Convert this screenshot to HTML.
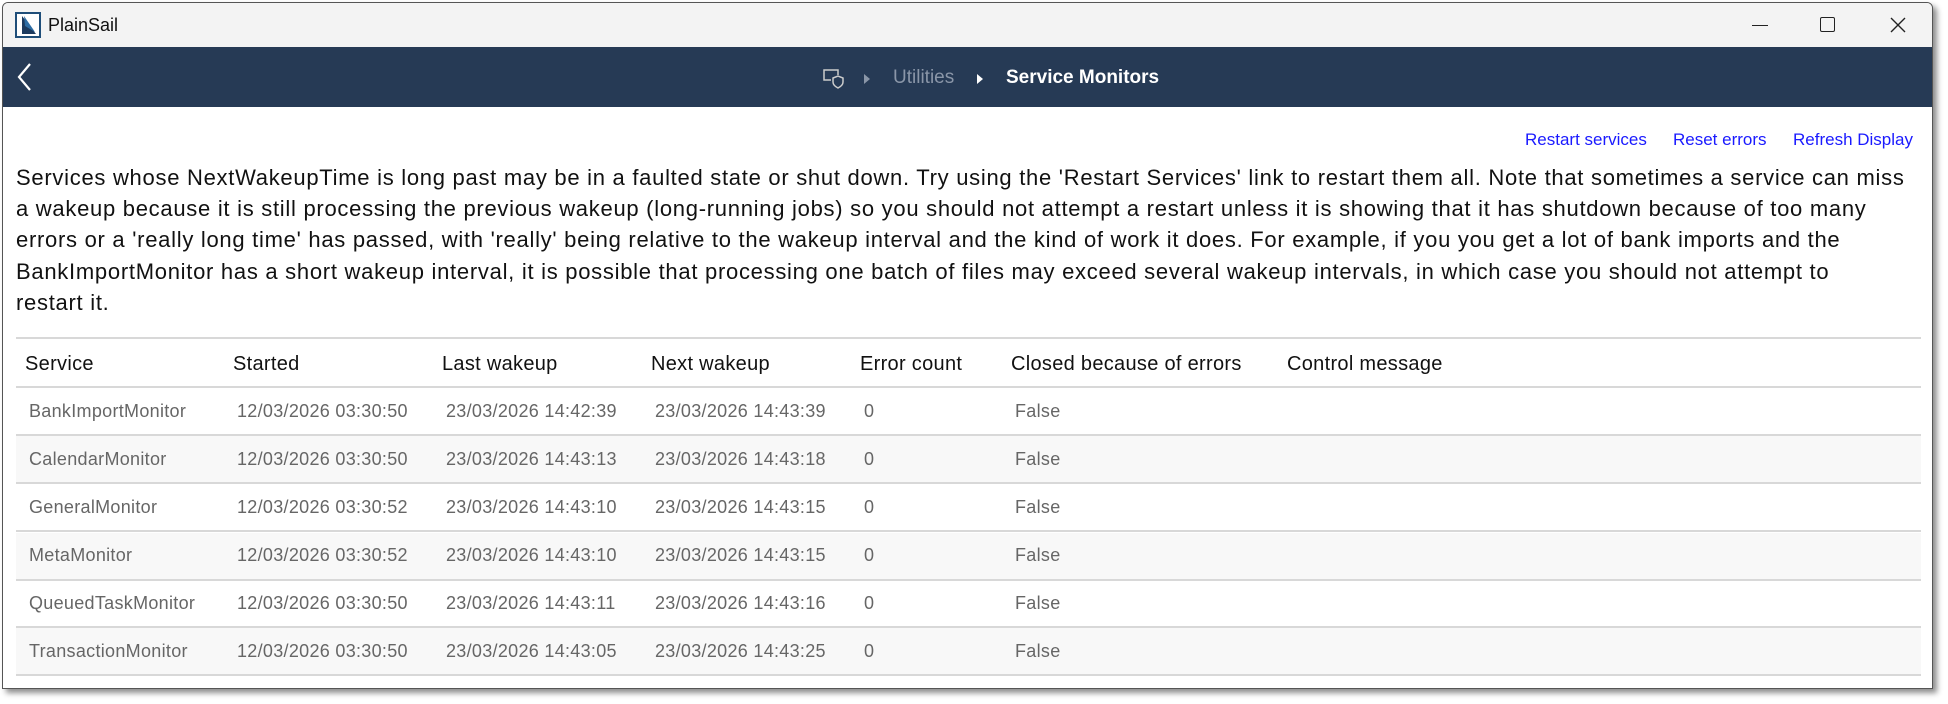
<!DOCTYPE html>
<html><head><meta charset="utf-8"><style>
*{margin:0;padding:0;box-sizing:border-box}
body{width:1948px;height:704px;background:#fff;font-family:"Liberation Sans",sans-serif;position:relative;overflow:hidden}
.win{position:absolute;left:2px;top:2px;width:1931px;height:687px;border:1px solid #555;background:#fff;box-shadow:4px 4px 6px rgba(0,0,0,.45);border-radius:6px 6px 0 0;overflow:hidden}
.title{position:absolute;left:0;top:0;width:100%;height:44px;background:#f3f3f3}
.nav{position:absolute;left:0;top:44px;width:100%;height:60px;background:#263a55}
.abs{position:absolute;white-space:nowrap}
.link{color:#1a1aff;font-size:17px}
.p{font-size:22px;color:#111;left:13px;letter-spacing:0.72px}
.th{font-size:20px;color:#111;letter-spacing:0.3px}
.td{font-size:18px;color:#666;letter-spacing:0.3px}
.line{position:absolute;left:13px;width:1905px;height:2px;background:#d8d8d8}
.alt{position:absolute;left:13px;width:1905px;height:47px;background:#f8f8f8}
</style></head><body>
<div class="win">
<div class="title">
<svg class="abs" style="left:12px;top:9px" width="26" height="26" viewBox="0 0 26 26"><rect x="1" y="1" width="24" height="24" fill="#fff" stroke="#1f4e79" stroke-width="2"/><path d="M7 4 L7 22 L21 22 Z" fill="#1c3a5e"/><path d="M9 4 L20 20 L10 14Z" fill="#2e6da4"/></svg>
<div class="abs" style="left:45px;top:12px;font-size:18px;color:#111">PlainSail</div>
<div class="abs" style="left:1749px;top:22px;width:16px;height:1px;background:#222"></div>
<div class="abs" style="left:1817px;top:14px;width:15px;height:15px;border:1.5px solid #222;border-radius:2px"></div>
<svg class="abs" style="left:1887px;top:14px" width="16" height="16"><path d="M1 1L15 15M15 1L1 15" stroke="#222" stroke-width="1.4"/></svg>
</div>
<div class="nav">
<svg class="abs" style="left:14px;top:16px" width="16" height="28"><path d="M13 1L2 14L13 27" stroke="#fff" stroke-width="2.2" fill="none"/></svg>
<svg class="abs" style="left:820px;top:22px" width="22" height="20" viewBox="0 0 22 20"><path d="M8 11H1V1H15V6" stroke="#ccc" stroke-width="1.5" fill="none"/><path d="M10 9L15 7L20 9V13C20 16 17 18 15 19C13 18 10 16 10 13Z" stroke="#ccc" stroke-width="1.5" fill="none"/></svg>
<svg class="abs" style="left:860px;top:26px" width="8" height="12"><path d="M1 1L7 6L1 11Z" fill="#8a96a8"/></svg>
<div class="abs" style="left:890px;top:20px;font-size:19px;color:#8a96a8">Utilities</div>
<svg class="abs" style="left:973px;top:26px" width="8" height="12"><path d="M1 1L7 6L1 11Z" fill="#fff"/></svg>
<div class="abs" style="left:1003px;top:20px;font-size:19px;color:#fff;font-weight:bold">Service Monitors</div>
</div>
<div class="abs link" style="left:1522px;top:127px">Restart services</div>
<div class="abs link" style="left:1670px;top:127px">Reset errors</div>
<div class="abs link" style="left:1790px;top:127px">Refresh Display</div>
<div class="abs p" style="top:162px">Services whose NextWakeupTime is long past may be in a faulted state or shut down. Try using the 'Restart Services' link to restart them all. Note that sometimes a service can miss</div>
<div class="abs p" style="top:193px">a wakeup because it is still processing the previous wakeup (long-running jobs) so you should not attempt a restart unless it is showing that it has shutdown because of too many</div>
<div class="abs p" style="top:224px">errors or a 'really long time' has passed, with 'really' being relative to the wakeup interval and the kind of work it does. For example, if you you get a lot of bank imports and the</div>
<div class="abs p" style="top:256px">BankImportMonitor has a short wakeup interval, it is possible that processing one batch of files may exceed several wakeup intervals, in which case you should not attempt to</div>
<div class="abs p" style="top:287px">restart it.</div>
<div class="line" style="top:334px"></div>
<div class="abs th" style="left:22px;top:350px">Service</div>
<div class="abs th" style="left:230px;top:350px">Started</div>
<div class="abs th" style="left:439px;top:350px">Last wakeup</div>
<div class="abs th" style="left:648px;top:350px">Next wakeup</div>
<div class="abs th" style="left:857px;top:350px">Error count</div>
<div class="abs th" style="left:1008px;top:350px">Closed because of errors</div>
<div class="abs th" style="left:1284px;top:350px">Control message</div>
<div class="line" style="top:383px"></div>
<div class="alt" style="top:433px"></div>
<div class="alt" style="top:530px"></div>
<div class="alt" style="top:625px"></div>
<div class="line" style="top:431px"></div>
<div class="line" style="top:479px"></div>
<div class="line" style="top:527px"></div>
<div class="line" style="top:576px"></div>
<div class="line" style="top:623px"></div>
<div class="line" style="top:671px"></div>
<div class="abs td" style="left:26px;top:398px">BankImportMonitor</div><div class="abs td" style="left:234px;top:398px">12/03/2026 03:30:50</div><div class="abs td" style="left:443px;top:398px">23/03/2026 14:42:39</div><div class="abs td" style="left:652px;top:398px">23/03/2026 14:43:39</div><div class="abs td" style="left:861px;top:398px">0</div><div class="abs td" style="left:1012px;top:398px">False</div>
<div class="abs td" style="left:26px;top:446px">CalendarMonitor</div><div class="abs td" style="left:234px;top:446px">12/03/2026 03:30:50</div><div class="abs td" style="left:443px;top:446px">23/03/2026 14:43:13</div><div class="abs td" style="left:652px;top:446px">23/03/2026 14:43:18</div><div class="abs td" style="left:861px;top:446px">0</div><div class="abs td" style="left:1012px;top:446px">False</div>
<div class="abs td" style="left:26px;top:494px">GeneralMonitor</div><div class="abs td" style="left:234px;top:494px">12/03/2026 03:30:52</div><div class="abs td" style="left:443px;top:494px">23/03/2026 14:43:10</div><div class="abs td" style="left:652px;top:494px">23/03/2026 14:43:15</div><div class="abs td" style="left:861px;top:494px">0</div><div class="abs td" style="left:1012px;top:494px">False</div>
<div class="abs td" style="left:26px;top:542px">MetaMonitor</div><div class="abs td" style="left:234px;top:542px">12/03/2026 03:30:52</div><div class="abs td" style="left:443px;top:542px">23/03/2026 14:43:10</div><div class="abs td" style="left:652px;top:542px">23/03/2026 14:43:15</div><div class="abs td" style="left:861px;top:542px">0</div><div class="abs td" style="left:1012px;top:542px">False</div>
<div class="abs td" style="left:26px;top:590px">QueuedTaskMonitor</div><div class="abs td" style="left:234px;top:590px">12/03/2026 03:30:50</div><div class="abs td" style="left:443px;top:590px">23/03/2026 14:43:11</div><div class="abs td" style="left:652px;top:590px">23/03/2026 14:43:16</div><div class="abs td" style="left:861px;top:590px">0</div><div class="abs td" style="left:1012px;top:590px">False</div>
<div class="abs td" style="left:26px;top:638px">TransactionMonitor</div><div class="abs td" style="left:234px;top:638px">12/03/2026 03:30:50</div><div class="abs td" style="left:443px;top:638px">23/03/2026 14:43:05</div><div class="abs td" style="left:652px;top:638px">23/03/2026 14:43:25</div><div class="abs td" style="left:861px;top:638px">0</div><div class="abs td" style="left:1012px;top:638px">False</div>
</div>
</body></html>
